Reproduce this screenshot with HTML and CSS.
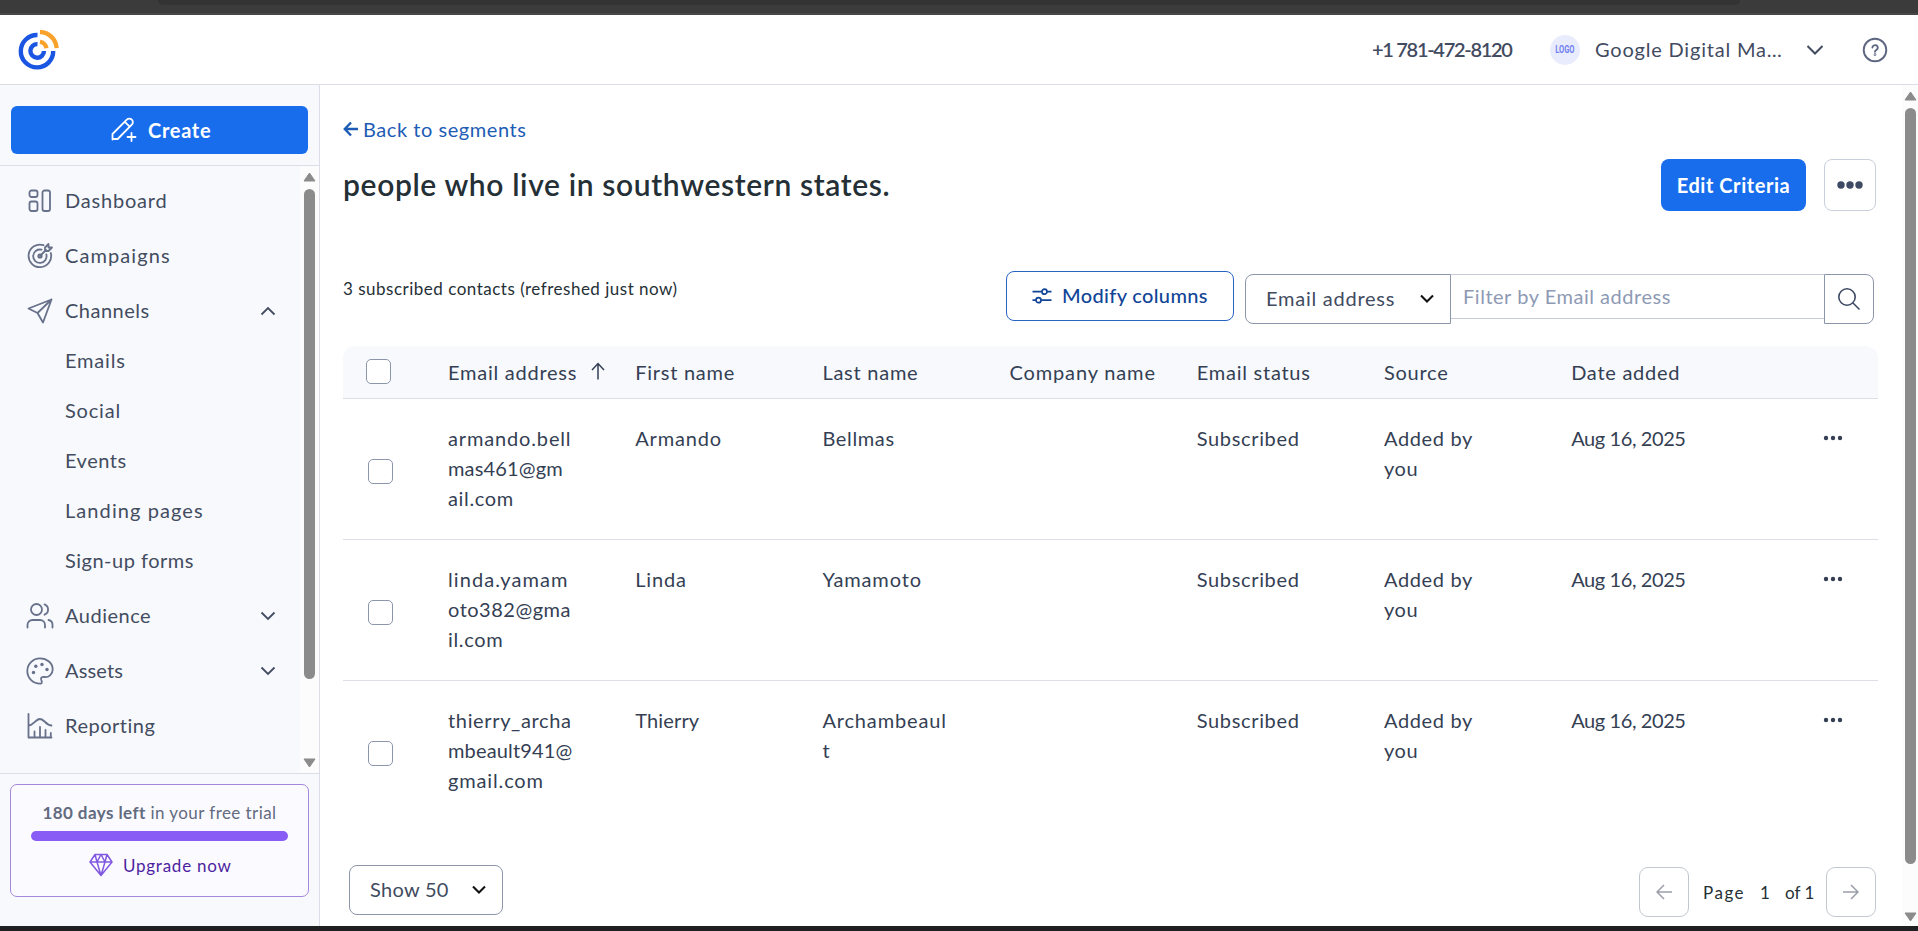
FILE: index.html
```
<!DOCTYPE html>
<html lang="en">
<head>
<meta charset="utf-8">
<title>Segment contacts</title>
<link rel="stylesheet" href="styles.css">
</head>
<body>
<div class="chrome-top"><div class="chrome-tab"></div></div>
<header class="header">
  <svg class="brand" viewBox="0 0 42 42" fill="none" stroke-width="4.4">
    <path d="M19.5 6A16.200 16.200 0 1 0 35.200 22" stroke="#1b56e3"/>
    <path d="M19.5 15.100A6.800 6.800 0 1 0 26 22" stroke="#1b56e3"/>
    <path d="M22 3A17 17 0 0 1 38.600 19.200" stroke="#f9a22b"/>
    <path d="M22 12.900A7.300 7.300 0 0 1 28.400 19.200" stroke="#f9a22b"/>
  </svg>
  <div class="account">
    <span class="phone">+1 781-472-8120</span>
    <span class="avatar"><span>LOGO</span></span>
    <span class="org">Google Digital Ma…</span>
    <svg class="chev-org" viewBox="0 0 18 12"><path d="M1.5 2 9 9.500 16.500 2"/></svg>
    <svg class="help" viewBox="0 0 26 26" fill="none" stroke="#5d6680" stroke-width="1.9" stroke-linecap="round"><circle cx="13" cy="13" r="11.3"/><path d="M10.400 10.600a2.700 2.500 0 1 1 4.200 2.100c-1 .6-1.600 1-1.600 2"/><circle cx="13" cy="17.600" r=".4"/></svg>
  </div>
</header>
<div class="shell">
  <aside class="sidebar">
    <div class="create-wrap">
      <button class="create">
        <svg width="26" height="26" viewBox="0 0 26 26" fill="none" stroke="#fff" stroke-width="1.8" stroke-linejoin="round" stroke-linecap="round"><path d="M1.500 22.500V17L15.800 2.700a3.500 3.500 0 0 1 5 5L6.700 22H1.500M13.800 4.800l4.900 4.900M20.500 16v8M16.500 20h8"/></svg>
        <span>Create</span>
      </button>
    </div>
    <div class="nav-area">
      <nav class="nav">
        <a class="item"><svg class="ico" viewBox="0 0 28 28"><rect x="3.500" y="3.500" width="8" height="6.500" rx="2"/><rect x="3.500" y="14.500" width="8" height="9.500" rx="2"/><rect x="16.500" y="3.500" width="7.500" height="20.500" rx="2"/></svg><span>Dashboard</span></a>
        <a class="item"><svg class="ico" viewBox="0 0 28 28"><path d="M17.500 3.200a11.300 11.300 0 1 0 7.300 7.800"/><path d="M15.500 7.700a6.700 6.700 0 1 0 4.800 4.600"/><circle cx="14" cy="14" r="1.700"/><path d="M14 14l6-6M19 9V5.500L22.500 2v3.500H26L22.500 9Z"/></svg><span class="wider">Campaigns</span></a>
        <a class="item"><svg class="ico" viewBox="0 0 28 28"><path d="M2.500 11.500 25.500 2.500 17 25.500 11.500 16Z M11.500 16 25.500 2.500"/></svg><span class="mid">Channels</span><svg class="chev" viewBox="0 0 16 10"><path d="M1.500 8.500 8 2l6.500 6.500"/></svg></a>
        <div class="subs">
          <a class="sub">Emails</a>
          <a class="sub">Social</a>
          <a class="sub mid">Events</a>
          <a class="sub wider">Landing pages</a>
          <a class="sub mid">Sign-up forms</a>
        </div>
        <a class="item"><svg class="ico" viewBox="0 0 28 28"><circle cx="10.500" cy="7.500" r="5.500"/><path d="M1.500 25.500v-2.500a5 5 0 0 1 5-5h7.500a5 5 0 0 1 5 5v2.500M18.500 2.400a5.500 5.500 0 0 1 0 10.300M22.500 18a5 5 0 0 1 4 5v2.500"/></svg><span class="mid">Audience</span><svg class="chev" viewBox="0 0 16 10"><path d="M1.500 1.500 8 8l6.500-6.500"/></svg></a>
        <a class="item"><svg class="ico" viewBox="0 0 28 28"><path d="M15 26.500C7 27 1.300 21 1.300 14A12.700 12.700 0 0 1 14 1.300C21 1.300 26.700 6 26.700 12.500c0 5-4.200 8-8.200 7.500-2.500-.3-4 .5-3.400 2.500.6 1.500 1.400 3.700-.1 4Z"/><g class="dots"><circle cx="7.500" cy="15.500" r="1.700"/><circle cx="9.800" cy="9.200" r="1.700"/><circle cx="16" cy="7.500" r="1.700"/><circle cx="21" cy="12.500" r="1.700"/></g></svg><span class="tight">Assets</span><svg class="chev" viewBox="0 0 16 10"><path d="M1.500 1.500 8 8l6.500-6.500"/></svg></a>
        <a class="item"><svg class="ico" viewBox="0 0 28 28"><path d="M2.500 2v23.500h23M2.500 13.500c5 0 7-6.500 11.500-6.500s6 6.500 11.500 6.500M8.500 25v-5.500M14 25V15M19.500 25v-7M24.800 25v-4"/></svg><span class="mid">Reporting</span></a>
      </nav>
      <div class="track track-nav">
        <svg viewBox="0 0 13 10"><path d="M6.500 1 12 9H1Z"/></svg>
        <div class="thumb"></div>
        <svg viewBox="0 0 13 10"><path d="M6.500 9 12 1H1Z"/></svg>
      </div>
    </div>
    <div class="trial-wrap">
      <div class="trial">
        <div class="trial-text"><b>180 days left</b> in your free trial</div>
        <div class="bar"></div>
        <div class="upgrade"><svg width="24" height="24" viewBox="0 0 24 24" fill="none" stroke="#8158e0" stroke-width="1.500" stroke-linejoin="round"><path d="M6 1.500h12L23 9 12 22.500 1 9ZM1 9h22M6 1.500 8 9l4 13.500L16 9l2-7.500M8 9l4-7.500L16 9"/></svg><span>Upgrade now</span></div>
      </div>
    </div>
  </aside>
  <main class="main">
    <div class="content">
      <a class="back"><svg width="16" height="16" viewBox="0 0 16 16" fill="none" stroke="#1d5cb5" stroke-width="2.400"><path d="M15 8H2M8 1.500 1.800 8 8 14.500"/></svg><span>Back to segments</span></a>
      <div class="title-row">
        <h1>people who live in southwestern states.</h1>
        <div class="actions">
          <button class="edit"><span>Edit Criteria</span></button>
          <button class="more"><svg width="26" height="8" viewBox="0 0 26 8" fill="#3e4a63"><circle cx="4" cy="4" r="3.700"/><circle cx="13" cy="4" r="3.700"/><circle cx="22" cy="4" r="3.700"/></svg></button>
        </div>
      </div>
      <div class="tools">
        <span class="count">3 subscribed contacts (refreshed just now)</span>
        <div class="filters">
          <button class="modify"><svg width="20" height="16" viewBox="0 0 20 16" fill="none" stroke="#114597" stroke-width="1.700"><path d="M.5 3.700h9.300M15.200 3.700h4.300M.5 12.200h3.300M9.200 12.200h10.300"/><circle cx="12.500" cy="3.700" r="2.500"/><circle cx="6.500" cy="12.200" r="2.500"/></svg><span>Modify columns</span></button>
          <div class="select field"><span>Email address</span><svg class="chev-sel" viewBox="0 0 14 10"><path d="M1 1.500 7 7.500l6-6"/></svg></div>
          <div class="filter-input"><span>Filter by Email address</span></div>
          <button class="search"><svg width="24" height="24" viewBox="0 0 24 24" fill="none" stroke="#3e4a63" stroke-width="1.600"><circle cx="10" cy="10" r="8.200"/><path d="M16 16l6.500 6.500"/></svg></button>
        </div>
      </div>
      <div class="table">
        <div class="row head">
          <i class="check"></i><span class="sorted"><span class="lbl">Email address</span><svg width="14" height="18" viewBox="0 0 14 18" fill="none" stroke="#353f54" stroke-width="1.500"><path d="M7 17.500V1.500M1 8 7 1.500 13 8"/></svg></span><span>First name</span><span>Last name</span><span class="wide">Company name</span><span>Email status</span><span>Source</span><span>Date added</span>
        </div>
        <div class="row">
          <i class="check"></i><span><span class="wide">armando.bell</span><br><span class="tight">mas461@gm</span><br>ail.com</span><span class="wide">Armando</span><span>Bellmas</span><span></span><span>Subscribed</span><span>Added by<br>you</span><span class="date">Aug 16, 2025</span><svg class="dots3" viewBox="0 0 20 6"><circle cx="3" cy="3" r="2.200"/><circle cx="10" cy="3" r="2.200"/><circle cx="17" cy="3" r="2.200"/></svg>
        </div>
        <div class="row">
          <i class="check"></i><span><span class="wider">linda.yamam</span><br><span class="mid">oto382@gma</span><br>il.com</span><span class="wide">Linda</span><span class="wide">Yamamoto</span><span></span><span>Subscribed</span><span>Added by<br>you</span><span class="date">Aug 16, 2025</span><svg class="dots3" viewBox="0 0 20 6"><circle cx="3" cy="3" r="2.200"/><circle cx="10" cy="3" r="2.200"/><circle cx="17" cy="3" r="2.200"/></svg>
        </div>
        <div class="row last">
          <i class="check"></i><span>thierry_archa<br><span class="tight">mbeault941@</span><br><span class="wide">gmail.com</span></span><span class="tight">Thierry</span><span class="wide">Archambeaul<br>t</span><span></span><span>Subscribed</span><span>Added by<br>you</span><span class="date">Aug 16, 2025</span><svg class="dots3" viewBox="0 0 20 6"><circle cx="3" cy="3" r="2.200"/><circle cx="10" cy="3" r="2.200"/><circle cx="17" cy="3" r="2.200"/></svg>
        </div>
      </div>
      <div class="footer">
        <div class="select show"><span>Show 50</span><svg class="chev-sel" viewBox="0 0 14 10"><path d="M1 1.500 7 7.500l6-6"/></svg></div>
        <div class="pager">
          <button class="page-btn"><svg width="16" height="16" viewBox="0 0 16 16"><path d="M16 8H1M8 1 1 8l7 7"/></svg></button>
          <span class="p-label">Page</span><span class="p-num">1</span><span class="p-of">of 1</span>
          <button class="page-btn"><svg width="16" height="16" viewBox="0 0 16 16"><path d="M0 8h15M8 1l7 7-7 7"/></svg></button>
        </div>
      </div>
    </div>
    <div class="track track-main">
      <svg viewBox="0 0 13 10"><path d="M6.500 1 12 9H1Z"/></svg>
      <div class="thumb"></div>
      <svg viewBox="0 0 13 10"><path d="M6.500 9 12 1H1Z"/></svg>
    </div>
  </main>
</div>
<div class="chrome-bottom"></div>
</body>
</html>
```

FILE: styles.css
```
* { box-sizing: border-box; }
body {
  margin: 0; width: 1918px; height: 931px; overflow: hidden;
  display: flex; flex-direction: column; background: #fff;
  font-family: Lato, "Open Sans", sans-serif; font-size: 20px; color: #353f54;
}
button { font: inherit; letter-spacing: inherit; padding: 0; margin: 0; border: 0; background: #fff; display: flex; align-items: center; }
span, b { white-space: nowrap; }
h1 { margin: 0; }
svg { flex: none; display: block; }

.chrome-top { height: 15px; flex: none; background: #3b3b3b; border-bottom: 2px solid #484748; }
.chrome-tab { height: 5px; margin: 0 178px 0 158px; background: #333; border-radius: 0 0 10px 10px; }
.chrome-bottom { height: 5px; flex: none; background: #202022; }

.header { height: 70px; flex: none; display: flex; align-items: center; justify-content: space-between; padding: 0 30px 0 18px; border-bottom: 1px solid #dbdee6; }
.brand { width: 42px; height: 42px; }
.account { display: flex; align-items: center; color: #424b5f; }
.phone { width: 144px; margin-right: 34px; font-weight: 600; letter-spacing: -1.3px; padding-bottom: 1px; }
.avatar { width: 30px; height: 30px; border-radius: 50%; background: #e9ecfd; color: #7282ee; font: bold 10px/30px Roboto, sans-serif; margin-right: 15px; display: flex; justify-content: center; }
.avatar span { transform: scaleX(.75); }
.org { width: 188px; margin-right: 23px; letter-spacing: .8px; padding-bottom: 1px; }
.chev-org { width: 18px; height: 12px; margin-right: 38px; fill: none; stroke: #424b5f; stroke-width: 2; }
.help { width: 26px; height: 26px; }

.shell { flex: 1; display: flex; min-height: 0; }
.sidebar { width: 320px; flex: none; border-right: 1px solid #dbdee8; background: #f7f9fd; display: flex; flex-direction: column; }
.create-wrap { height: 81px; flex: none; padding: 21px 11px 0; border-bottom: 1px solid #dbdee8; }
.create { width: 297px; height: 48px; border-radius: 6px; background: #186ded; color: #fff; font-weight: 700; letter-spacing: .7px; padding-left: 100px; gap: 11px; }
.create span { padding-bottom: 1px; }
.nav-area { height: 608px; flex: none; display: flex; border-bottom: 1px solid #dbdee8; }
.nav { flex: 1; padding-top: 7px; color: #434c60; letter-spacing: .8px; }
.item { height: 55px; display: flex; align-items: center; padding: 0 24px 0 26px; }
.item span { margin-left: 11px; flex: 1; padding-bottom: 2px; }
.subs { height: 250px; }
.sub { height: 50px; display: flex; align-items: center; padding: 0 0 6px 65px; }
.ico { width: 28px; height: 28px; fill: none; stroke: #68718a; stroke-width: 1.8; stroke-linecap: round; stroke-linejoin: round; }
.dots { fill: #68718a; stroke: none; }
.chev { width: 16px; height: 10px; fill: none; stroke: #434c60; stroke-width: 1.8; }
.wider { letter-spacing: 1.08px; }
.wide { letter-spacing: .85px; }
.mid { letter-spacing: .5px; }
.tight { letter-spacing: .15px; }

.track { background: #fcfcfd; display: flex; flex-direction: column; align-items: center; flex: none; }
.track svg { width: 13px; height: 10px; fill: #8b8b8b; stroke: #8b8b8b; stroke-width: 1; stroke-linejoin: round; }
.thumb { width: 11px; border-radius: 6px; background: #8b8b8b; }
.track-nav { width: 19px; padding-top: 6px; }
.track-nav .thumb { height: 490px; margin: 7px 0 79px; }
.track-main { width: 16px; padding: 6px 0 0 1px; }
.track-main .thumb { height: 756px; margin: 7px 0 48px; }

.trial-wrap { padding: 10px 10px 0; }
.trial { height: 113px; border: 1px solid #a488dd; border-radius: 7px; background: #fbfaff; padding: 15px 20px 0; }
.trial-text { height: 26px; line-height: 26px; font-size: 17px; letter-spacing: .43px; color: #626b80; text-align: center; white-space: nowrap; }
.bar { height: 10px; margin-top: 5px; border-radius: 5px; background: #8a5cf6; }
.upgrade { display: flex; align-items: center; height: 30px; margin-top: 9px; padding-left: 58px; gap: 10px; font-size: 17px; letter-spacing: .75px; color: #4d1fa0; }

.main { flex: 1; display: flex; min-width: 0; }
.content { flex: 1; padding: 30px 24px 0 23px; }
.back { display: flex; align-items: center; height: 28px; gap: 4px; color: #1d5cb5; letter-spacing: .55px; }
.title-row { display: flex; justify-content: space-between; height: 52px; margin-top: 16px; padding-right: 2px; }
h1 { font-size: 30px; line-height: 50px; font-weight: 600; letter-spacing: .63px; color: #253036; }
.actions { display: flex; gap: 18px; }
.edit { width: 145px; height: 52px; border-radius: 8px; background: #186ded; color: #fff; font-weight: 700; letter-spacing: .55px; justify-content: center; }
.more { width: 52px; height: 52px; border: 1px solid #c9cfdb; border-radius: 8px; justify-content: center; }
.tools { display: flex; justify-content: space-between; margin-top: 60px; height: 75px; padding-right: 4px; }
.count { font-size: 17px; line-height: 36px; letter-spacing: .5px; color: #253036; }
.filters { display: flex; align-items: flex-start; }
.modify { width: 228px; height: 50px; border: 1px solid #2765bf; border-radius: 8px; color: #114597; font-weight: 500; letter-spacing: .35px; padding-left: 25px; gap: 10px; margin-right: 11px; }
.modify span { padding-bottom: 2px; }
.select { display: flex; align-items: center; border: 1px solid #8c96ab; height: 50px; padding: 0 16px 0 20px; justify-content: space-between; color: #424b5f; }
.select span { padding-bottom: 2px; }
.chev-sel { width: 14px; height: 10px; fill: none; stroke: #111; stroke-width: 2.1; }
.field { width: 206px; margin-top: 3px; border-radius: 8px 0 0 8px; letter-spacing: .75px; }
.filter-input { width: 373px; height: 45px; margin-top: 3px; border: solid #c6cbd7; border-width: 1px 0; padding: 0 0 1px 12px; display: flex; align-items: center; color: #8e9ab4; letter-spacing: .53px; }
.search { width: 50px; height: 50px; margin-top: 3px; border: 1px solid #8c96ab; border-radius: 0 8px 8px 0; justify-content: center; }

.table { width: 1535px; letter-spacing: .65px; }
.row { display: grid; grid-template-columns: 105px repeat(6, 187.2px) 252px 1fr; height: 141px; padding-top: 24px; border-bottom: 1px solid #dcdfe6; line-height: 30px; }
.row.last { border-bottom-color: transparent; }
.head { height: 53px; padding-top: 11px; background: #f7f9fd; border-radius: 12px 12px 0 0; letter-spacing: .75px; }
.check { width: 25px; height: 25px; margin: 36px 0 0 25px; border: 1px solid #8c96ab; border-radius: 5px; background: #fff; }
.head .check { margin: 2px 0 0 23px; }
.sorted { display: flex; }
.sorted .lbl { width: 143px; }
.sorted svg { margin-top: 5px; }
.date { letter-spacing: -.4px; }
.dots3 { width: 20px; height: 6px; margin-top: 12px; fill: #353f54; }

.footer { display: flex; justify-content: space-between; margin-top: 43px; padding: 0 2px 0 6px; }
.show { width: 154px; border-radius: 8px; letter-spacing: .3px; }
.pager { display: flex; align-items: center; height: 50px; margin-top: 2px; font-size: 17px; color: #253036; }
.page-btn { width: 50px; height: 50px; border: 1px solid #c3c8cf; border-radius: 9px; justify-content: center; }
.page-btn svg { fill: none; stroke: #9a9ea8; stroke-width: 1.5; }
.p-label { width: 44px; margin-left: 14px; letter-spacing: 1.5px; }
.p-num { width: 10px; margin: 0 15px 0 13px; }
.p-of { width: 28px; margin: 0 13px 0 0; }
```
